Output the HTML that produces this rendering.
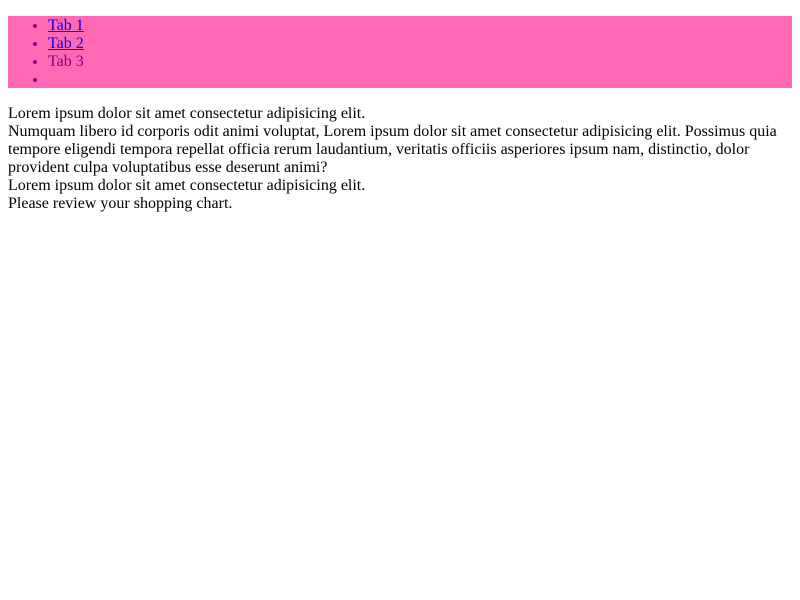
<!DOCTYPE html>
<html><head><meta charset="utf-8"><style>
body{margin:8px;font-family:"Liberation Serif",serif;font-size:16px;line-height:18px;color:#000;background:#fff}
ul{background:#ff69b4;color:#800080;margin:16px 0;padding-left:40px}
li,div{position:relative;top:1px}
a{color:#0000ee}
</style></head><body>
<ul><li><a href="#">Tab 1</a></li><li><a href="#">Tab 2</a></li><li>Tab 3</li><li></li></ul>
<div>Lorem ipsum dolor sit amet consectetur adipisicing elit.<br>Numquam libero id corporis odit animi voluptat, Lorem ipsum dolor sit amet consectetur adipisicing elit. Possimus quia tempore eligendi tempora repellat officia rerum laudantium, veritatis officiis asperiores ipsum nam, distinctio, dolor provident culpa voluptatibus esse deserunt animi?<br>Lorem ipsum dolor sit amet consectetur adipisicing elit.<br>Please review your shopping chart.</div>
</body></html>
